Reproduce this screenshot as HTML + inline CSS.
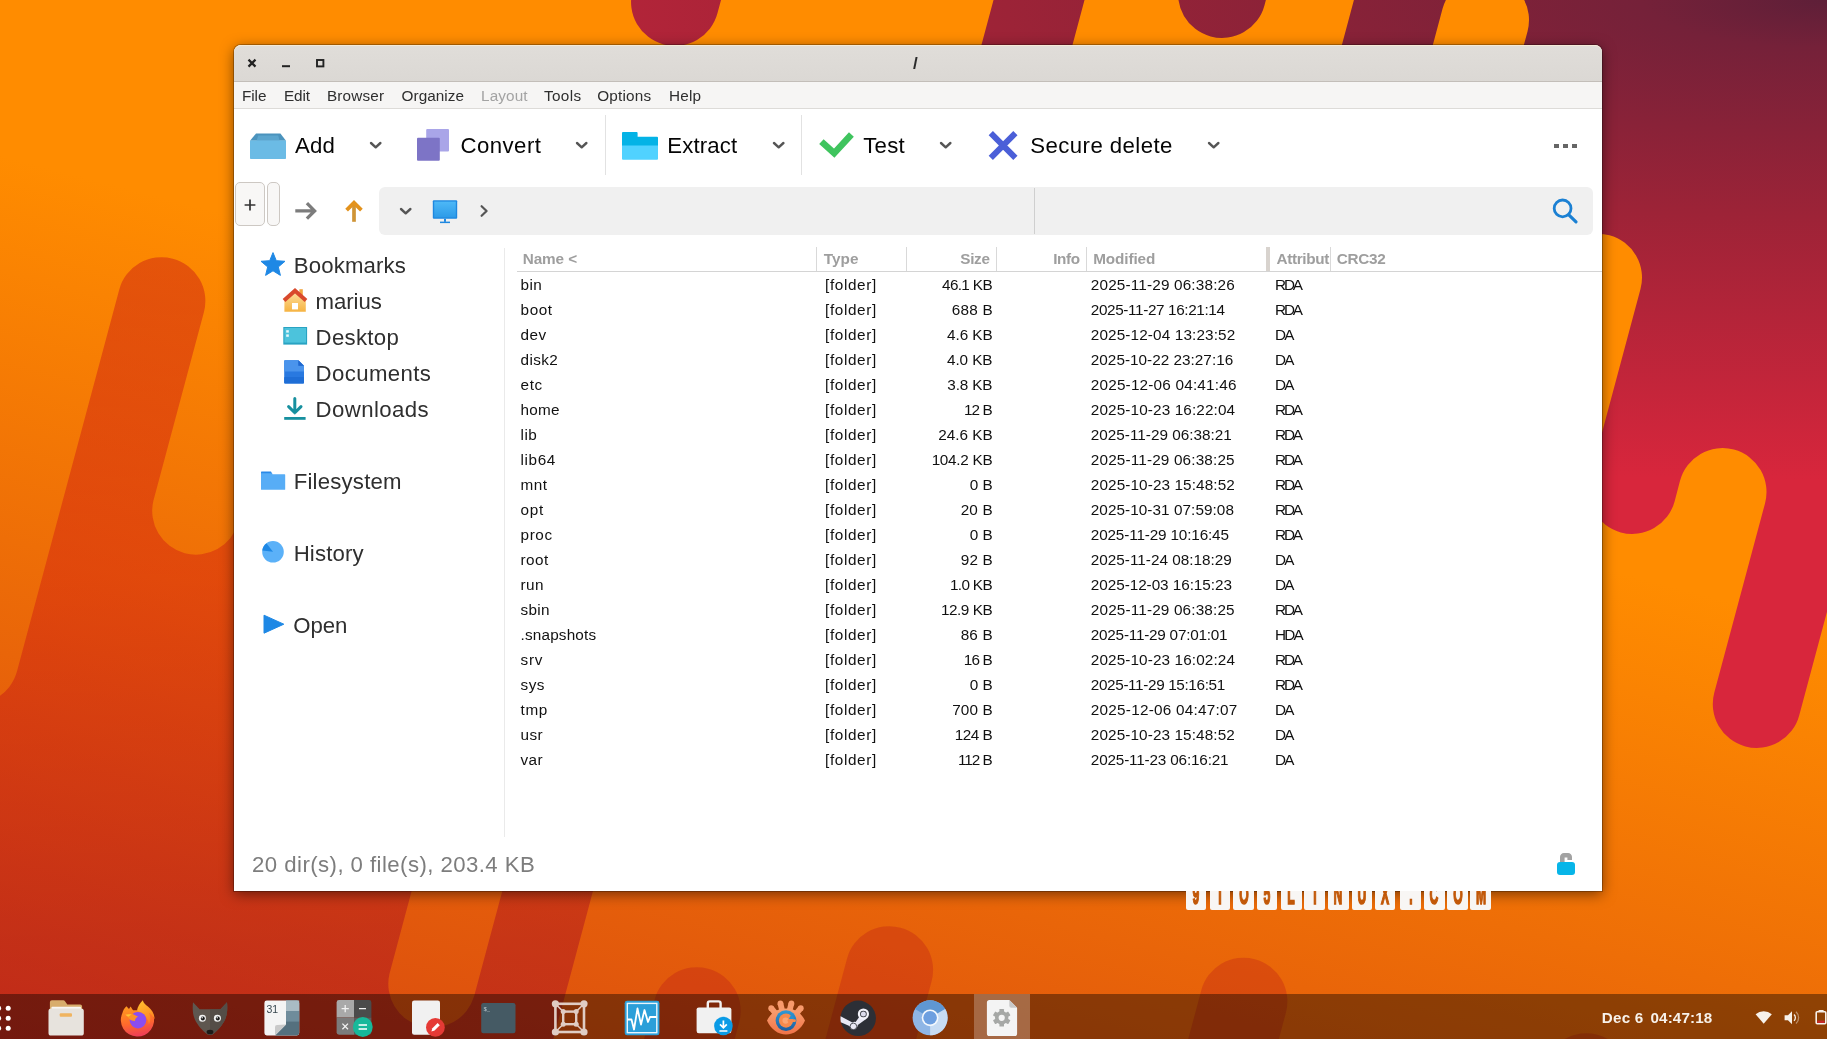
<!DOCTYPE html>
<html lang="en"><head><meta charset="utf-8"><title>/</title>
<style>
*{box-sizing:border-box}
html,body{margin:0;padding:0}
body{width:1827px;height:1039px;position:relative;overflow:hidden;background:#f07808;font-family:"Liberation Sans",sans-serif}
.root{position:absolute;left:0;top:0;width:1827px;height:1039px;overflow:hidden;will-change:transform}
.a,.t,.wall{position:absolute}
.wall{left:0;top:0}
.t{white-space:pre;margin:0;padding:0}
.win{position:absolute;left:234px;top:45px;width:1368px;height:846px;background:#fff;border-radius:7px 7px 0 0;
 box-shadow:0 3px 14px 0 rgba(0,0,0,0.50),0 0 0 1px rgba(0,0,0,0.25)}
.titlebar{position:absolute;left:234px;top:45px;width:1368px;height:37px;background:linear-gradient(#e0ddd9,#dbd8d4);border-radius:7px 7px 0 0;border-bottom:1px solid #c3beb9;border-top:1px solid #f4ead8}
.menubar{position:absolute;left:234px;top:82px;width:1368px;height:27px;background:#f6f5f4;border-bottom:1px solid #dddbd8}
.vsep{position:absolute;width:1px;background:#e2e2e2}
.btn{position:absolute;border:1px solid #cdc8c3;border-radius:5px;background:#f8f7f6}
.addr{position:absolute;left:379px;top:187px;width:1214px;height:48px;background:#f0f0f0;border-radius:6px}
.tbar{position:absolute;left:0;top:994px;width:1827px;height:45px;background:rgba(0,0,0,0.40)}
.wm{position:absolute;left:1185.8px;top:891px;width:306px;height:19px;overflow:hidden}
.wb{position:absolute;top:0;width:20.6px;height:19px;background:#f8f6f4;border-radius:0 0 2px 2px;overflow:hidden}
.wb span{position:absolute;left:-19.7px;width:60px;top:-10.8px;text-align:center;font-weight:bold;font-size:29px;line-height:29px;color:#c25808;-webkit-text-stroke:1.7px #c25808;transform:scaleX(0.42)}
</style></head><body>
<div class="root">
<svg class="wall" width="1827" height="1039" viewBox="0 0 1827 1039">
<defs>
<linearGradient id="gO" gradientUnits="userSpaceOnUse" x1="-37.5" y1="145.5" x2="-250" y2="970">
<stop offset="0" stop-color="#FF8C00"/><stop offset="1" stop-color="#D84710"/></linearGradient>
<radialGradient id="gR" gradientUnits="userSpaceOnUse" cx="0" cy="0" r="1" gradientTransform="translate(1827 0) scale(1860 480)">
<stop offset="0" stop-color="#5E1F38"/><stop offset="0.1" stop-color="#752139"/><stop offset="0.45" stop-color="#9D2337"/><stop offset="1" stop-color="#D8263C"/></radialGradient>
<linearGradient id="gD" gradientUnits="userSpaceOnUse" x1="0" y1="300" x2="0" y2="1000">
<stop offset="0" stop-color="#BE0019" stop-opacity="0.38"/><stop offset="0.4" stop-color="#C80014" stop-opacity="0.34"/><stop offset="0.92" stop-color="#9E0025" stop-opacity="0.40"/></linearGradient>
</defs>
<rect width="1827" height="1039" fill="url(#gO)"/>
<path d="M-300.0,1400.0 L-67.7,648.7 A43.80,43.80 0 0 0 17.0,671.3 L119.2,289.7 A43.80,43.80 0 0 1 203.9,312.3 L153.4,500.7 A43.80,43.80 0 0 0 238.0,523.3 L268.7,408.7 A43.80,43.80 0 0 1 353.4,431.3 L284.4,688.7 A43.80,43.80 0 0 0 369.0,711.3 L401.9,588.7 A43.80,43.80 0 0 1 486.5,611.3 L389.5,973.7 A43.80,43.80 0 0 0 474.1,996.3 L583.3,588.7 A43.80,43.80 0 0 1 667.9,611.3 L486.5,1288.7 A43.80,43.80 0 0 0 571.1,1311.3 L547.3,1400.0 Z" fill="url(#gD)"/>
<line x1="696.9" y1="1011" x2="619.5" y2="1300" stroke="#AA001E" stroke-opacity="0.24" stroke-width="87.6" stroke-linecap="round"/>
<line x1="889.3" y1="970" x2="800.9" y2="1300" stroke="#AA001E" stroke-opacity="0.24" stroke-width="87.6" stroke-linecap="round"/>
<line x1="1243.6" y1="1001.5" x2="1163.7" y2="1300" stroke="#AA001E" stroke-opacity="0.24" stroke-width="87.6" stroke-linecap="round"/>
<line x1="1586.2" y1="1077" x2="1526.5" y2="1300" stroke="#AA001E" stroke-opacity="0.24" stroke-width="87.6" stroke-linecap="round"/>
<path d="M1407.5,-200.0 L1276.6,288.6 A43.95,43.95 0 0 0 1361.5,311.4 L1442.6,8.6 A43.95,43.95 0 0 1 1527.5,31.4 L1450.5,318.6 A43.95,43.95 0 0 0 1535.4,341.4 L1555.6,266.2 A43.95,43.95 0 0 1 1640.5,289.0 L1589.7,478.6 A43.95,43.95 0 0 0 1674.6,501.4 L1680.1,480.6 A43.95,43.95 0 0 1 1765.0,503.4 L1714.3,692.6 A43.95,43.95 0 0 0 1799.2,715.4 L1843.9,548.6 A43.95,43.95 0 0 1 1928.8,571.4 L1843.8,888.6 A43.95,43.95 0 0 0 1928.7,911.4 L2300.0,900.0 L2300.0,-200.0 Z" fill="url(#gR)"/>
<line x1="755.9" y1="-300" x2="675.0" y2="2" stroke="url(#gR)" stroke-width="87.9" stroke-linecap="round"/>
<line x1="1119.4" y1="-300" x2="1014.9" y2="90" stroke="url(#gR)" stroke-width="87.9" stroke-linecap="round"/>
<line x1="1300.8" y1="-300" x2="1222.0" y2="-6" stroke="url(#gR)" stroke-width="87.9" stroke-linecap="round"/>
</svg>
<div class="win"></div>
<div class="titlebar"></div>
<div class="menubar"></div>
<svg class="a" style="left:240px;top:52px" width="100" height="24">
<path d="M8.5,7.6 L15.5,14.6 M15.5,7.6 L8.5,14.6" stroke="#222" stroke-width="2.2" fill="none"/>
<rect x="42" y="13.2" width="8" height="2" fill="#222"/>
<rect x="77" y="8" width="6.4" height="6.4" fill="none" stroke="#222" stroke-width="1.9"/>
</svg>
<span class="t " style="left:912.90px;top:55.01px;font-size:17px;line-height:17px;color:#2b2b2b;font-weight:bold;">/</span>
<span class="t " style="left:242.10px;top:87.85px;font-size:15.3px;line-height:15.3px;color:#2e2e2e;letter-spacing:-0.108px;">File</span>
<span class="t " style="left:283.90px;top:87.85px;font-size:15.3px;line-height:15.3px;color:#2e2e2e;letter-spacing:-0.068px;">Edit</span>
<span class="t " style="left:326.90px;top:87.85px;font-size:15.3px;line-height:15.3px;color:#2e2e2e;letter-spacing:0.185px;">Browser</span>
<span class="t " style="left:401.60px;top:87.85px;font-size:15.3px;line-height:15.3px;color:#2e2e2e;letter-spacing:0.043px;">Organize</span>
<span class="t " style="left:481.00px;top:87.85px;font-size:15.3px;line-height:15.3px;color:#a3a3a3;letter-spacing:0.123px;">Layout</span>
<span class="t " style="left:543.90px;top:87.85px;font-size:15.3px;line-height:15.3px;color:#2e2e2e;letter-spacing:0.377px;">Tools</span>
<span class="t " style="left:597.30px;top:87.85px;font-size:15.3px;line-height:15.3px;color:#2e2e2e;letter-spacing:0.174px;">Options</span>
<span class="t " style="left:669.00px;top:87.85px;font-size:15.3px;line-height:15.3px;color:#2e2e2e;letter-spacing:0.174px;">Help</span>
<svg class="a" style="left:248px;top:128px" width="42" height="36" viewBox="248 128 42 36">
<polygon points="256,133.6 280.4,133.6 286,140.8 250,140.8" fill="#4b93bd"/>
<polygon points="258.2,135.4 278.2,135.4 279.6,140.8 256.6,140.8" fill="#5ba5ce"/>
<rect x="250" y="140.6" width="36" height="18.4" rx="0.8" fill="#6bbbe5"/>
</svg>
<span class="t " style="left:295.10px;top:134.91px;font-size:22.2px;line-height:22.2px;color:#050505;letter-spacing:0.103px;">Add</span>
<svg class="a" style="left:369.3px;top:141.2px" width="13.4" height="8.3"><polyline points="2,2 6.7,6.3 11.4,2" fill="none" stroke="#555" stroke-width="2.4" stroke-linecap="round" stroke-linejoin="round"/></svg>
<svg class="a" style="left:415px;top:127px" width="38" height="38" viewBox="415 127 38 38">
<rect x="426.2" y="129" width="22.8" height="22.4" rx="1" fill="#a9a5e8"/>
<rect x="417" y="137.8" width="22.8" height="23" rx="1" fill="#7d74c6"/>
</svg>
<span class="t " style="left:460.40px;top:134.91px;font-size:22.2px;line-height:22.2px;color:#050505;letter-spacing:0.480px;">Convert</span>
<svg class="a" style="left:575.3px;top:141.2px" width="13.4" height="8.3"><polyline points="2,2 6.7,6.3 11.4,2" fill="none" stroke="#555" stroke-width="2.4" stroke-linecap="round" stroke-linejoin="round"/></svg>
<div class="vsep" style="left:605px;top:115px;height:60px"></div>
<svg class="a" style="left:620px;top:130px" width="40" height="32" viewBox="620 130 40 32">
<path d="M622,133 a1,1 0 0 1 1,-1 h13.6 a1,1 0 0 1 1,1 v3.7 h19.4 a1,1 0 0 1 1,1 v8.8 h-36 z" fill="#04b3e6"/>
<path d="M622,145.5 h36 v13.2 a1,1 0 0 1 -1,1 h-34 a1,1 0 0 1 -1,-1 z" fill="#50d2ff"/>
</svg>
<span class="t " style="left:667.30px;top:134.91px;font-size:22.2px;line-height:22.2px;color:#050505;letter-spacing:0.119px;">Extract</span>
<svg class="a" style="left:771.5px;top:141.2px" width="13.4" height="8.3"><polyline points="2,2 6.7,6.3 11.4,2" fill="none" stroke="#555" stroke-width="2.4" stroke-linecap="round" stroke-linejoin="round"/></svg>
<div class="vsep" style="left:801px;top:115px;height:60px"></div>
<svg class="a" style="left:816px;top:128px" width="42" height="34" viewBox="816 128 42 34">
<polyline points="821.4,141.6 834.2,153.2 851.4,134.6" fill="none" stroke="#3fc45e" stroke-width="6.6" stroke-linejoin="miter"/>
</svg>
<span class="t " style="left:863.20px;top:134.91px;font-size:22.2px;line-height:22.2px;color:#050505;letter-spacing:0.295px;">Test</span>
<svg class="a" style="left:939.3px;top:141.2px" width="13.4" height="8.3"><polyline points="2,2 6.7,6.3 11.4,2" fill="none" stroke="#555" stroke-width="2.4" stroke-linecap="round" stroke-linejoin="round"/></svg>
<svg class="a" style="left:985px;top:128px" width="36" height="36" viewBox="985 128 36 36">
<path d="M990.8,133.2 L1015.4,157.8 M1015.4,133.2 L990.8,157.8" stroke="#4b5fd8" stroke-width="6" fill="none"/>
</svg>
<span class="t " style="left:1030.30px;top:134.91px;font-size:22.2px;line-height:22.2px;color:#050505;letter-spacing:0.434px;">Secure delete</span>
<svg class="a" style="left:1207.3px;top:141.2px" width="13.4" height="8.3"><polyline points="2,2 6.7,6.3 11.4,2" fill="none" stroke="#555" stroke-width="2.4" stroke-linecap="round" stroke-linejoin="round"/></svg>
<div class="a" style="left:1554px;top:143.6px;width:4.6px;height:4.4px;background:#666"></div>
<div class="a" style="left:1563.2px;top:143.6px;width:4.6px;height:4.4px;background:#666"></div>
<div class="a" style="left:1572.4px;top:143.6px;width:4.6px;height:4.4px;background:#666"></div>
<div class="btn" style="left:234.5px;top:181.5px;width:30.6px;height:44.6px"></div>
<div class="btn" style="left:266.8px;top:181.5px;width:12.8px;height:44.6px"></div>
<svg class="a" style="left:240px;top:195px" width="20" height="20">
<path d="M10,4.6 V15.4 M4.6,10 H15.4" stroke="#333" stroke-width="1.7" fill="none"/></svg>
<svg class="a" style="left:290px;top:198px" width="32" height="26">
<path d="M5.3,12.9 H24.6 M16.9,5.2 L24.6,12.9 L16.9,20.6" stroke="#7c7c7c" stroke-width="3.3" fill="none" stroke-linejoin="miter"/></svg>
<svg class="a" style="left:340px;top:196px" width="28" height="30">
<path d="M14,25.8 V7.4" stroke="#cf9436" stroke-width="3.7" fill="none"/>
<path d="M6.6,14.2 L14,6.8 L21.4,14.2" stroke="#e3921c" stroke-width="3.8" fill="none" stroke-linejoin="miter"/></svg>
<div class="addr"></div>
<div class="a" style="left:1034px;top:188px;width:1px;height:46px;background:#cfcfcf"></div>
<svg class="a" style="left:399.2px;top:206.8px" width="13.4" height="8.3"><polyline points="2,2 6.7,6.3 11.4,2" fill="none" stroke="#555" stroke-width="2.4" stroke-linecap="round" stroke-linejoin="round"/></svg>
<svg class="a" style="left:430px;top:198px" width="30" height="28" viewBox="430 198 30 28">
<defs><linearGradient id="mon" x1="0" y1="0" x2="0" y2="1"><stop offset="0" stop-color="#4db8f7"/><stop offset="1" stop-color="#2d9be8"/></linearGradient></defs>
<rect x="432.8" y="200.2" width="24.4" height="18.6" rx="1" fill="#1e88e0"/>
<rect x="434.2" y="201.6" width="21.6" height="15.8" fill="url(#mon)"/>
<rect x="444" y="218.8" width="2" height="3" fill="#1e88e0"/>
<rect x="440" y="221.6" width="10" height="1.5" fill="#1e88e0"/>
</svg>
<svg class="a" style="left:476px;top:200px" width="16" height="22">
<polyline points="5.6,6.2 10.6,11 5.6,15.8" fill="none" stroke="#555" stroke-width="2.2" stroke-linecap="round" stroke-linejoin="round"/></svg>
<svg class="a" style="left:1548px;top:194px" width="34" height="34" viewBox="1548 194 34 34">
<circle cx="1562.6" cy="208.4" r="8.4" fill="none" stroke="#1b80d3" stroke-width="2.8"/>
<path d="M1568.8,214.8 L1576,221.8" stroke="#1b80d3" stroke-width="3.2" stroke-linecap="round"/></svg>
<svg class="a" style="left:258px;top:249px" width="30" height="30" viewBox="258 249 30 30"><polygon points="273.00,252.60 276.29,260.67 284.98,261.31 278.33,266.93 280.41,275.39 273.00,270.80 265.59,275.39 267.67,266.93 261.02,261.31 269.71,260.67" fill="#1e88e5" stroke="#1e88e5" stroke-width="1" stroke-linejoin="round"/></svg>
<span class="t " style="left:293.70px;top:254.81px;font-size:22.2px;line-height:22.2px;color:#2f2f2f;letter-spacing:0.157px;">Bookmarks</span>
<svg class="a" style="left:280px;top:286px" width="30" height="28" viewBox="280 286 30 28">
<defs><linearGradient id="hm" x1="0" y1="0" x2="0" y2="1"><stop offset="0" stop-color="#fde0a0"/><stop offset="1" stop-color="#f6b341"/></linearGradient></defs>
<rect x="299.4" y="289.2" width="3.4" height="7" fill="#f2a640"/>
<path d="M284.4,300.6 L295,291.4 L305.8,300.6 V311.8 H284.4 Z" fill="url(#hm)"/>
<path d="M284,300.6 L295,290.8 L306,300.6" fill="none" stroke="#d9492c" stroke-width="4" stroke-linejoin="miter"/>
<rect x="292" y="303" width="6" height="6.4" fill="#fff"/>
</svg>
<span class="t " style="left:315.60px;top:290.51px;font-size:22.2px;line-height:22.2px;color:#2f2f2f;letter-spacing:-0.064px;">marius</span>
<svg class="a" style="left:281px;top:324px" width="30" height="24" viewBox="281 324 30 24">
<rect x="283.3" y="327" width="23.8" height="17.6" fill="#29a3c2"/>
<rect x="284.4" y="328" width="21.6" height="14.6" fill="#4cc3dc"/>
<rect x="286.2" y="330.2" width="2.6" height="2.4" fill="#e8f8fc"/>
<rect x="286.2" y="334.4" width="2.6" height="2.4" fill="#e8f8fc"/>
</svg>
<span class="t " style="left:315.60px;top:326.51px;font-size:22.2px;line-height:22.2px;color:#2f2f2f;letter-spacing:0.295px;">Desktop</span>
<svg class="a" style="left:282px;top:358px" width="26" height="28" viewBox="282 358 26 28">
<path d="M284.2,361 a0.8,0.8 0 0 1 .8,-.8 H298.4 L304,365.8 V382.8 a0.8,0.8 0 0 1 -.8,.8 H285 a0.8,0.8 0 0 1 -.8,-.8 Z" fill="#2979e0"/>
<path d="M284.2,361 a0.8,0.8 0 0 1 .8,-.8 H298.4 V365.8 H304 V371.5 H284.2 Z" fill="#4a94ec"/>
<path d="M298.4,360.2 L304,365.8 H298.4 Z" fill="#2168cf"/>
<rect x="284.2" y="377" width="19.8" height="6.6" rx=".8" fill="#1f6ed6"/>
</svg>
<span class="t " style="left:315.60px;top:362.51px;font-size:22.2px;line-height:22.2px;color:#2f2f2f;letter-spacing:0.377px;">Documents</span>
<svg class="a" style="left:282px;top:395px" width="26" height="28" viewBox="282 395 26 28">
<path d="M294.8,398.4 V412.4 M288.6,406.6 L294.8,412.8 L301,406.6" fill="none" stroke="#17909f" stroke-width="3" stroke-linecap="round" stroke-linejoin="round"/>
<rect x="284.2" y="417" width="21.4" height="2.8" fill="#17909f"/>
</svg>
<span class="t " style="left:315.60px;top:398.51px;font-size:22.2px;line-height:22.2px;color:#2f2f2f;letter-spacing:0.410px;">Downloads</span>
<svg class="a" style="left:259px;top:469px" width="28" height="24" viewBox="259 469 28 24">
<path d="M261,472.2 a.6,.6 0 0 1 .6,-.6 H271 l1.4,2.4 H261 Z" fill="#2a8ae8"/>
<path d="M261,473.2 H271.6 l1,1 H284.6 a.6,.6 0 0 1 .6,.6 V489.2 a.6,.6 0 0 1 -.6,.6 H261.6 a.6,.6 0 0 1 -.6,-.6 Z" fill="#57adf6"/>
</svg>
<span class="t " style="left:293.70px;top:470.71px;font-size:22.2px;line-height:22.2px;color:#2f2f2f;letter-spacing:0.203px;">Filesystem</span>
<svg class="a" style="left:259px;top:538px" width="28" height="28" viewBox="259 538 28 28">
<circle cx="273" cy="551.8" r="10.8" fill="#5bb1f8"/>
<path d="M273,551.8 L262.3,550.4 A10.8,10.8 0 0 1 266.4,543.2 Z" fill="#1e88e5"/>
</svg>
<span class="t " style="left:293.70px;top:542.81px;font-size:22.2px;line-height:22.2px;color:#2f2f2f;letter-spacing:0.156px;">History</span>
<svg class="a" style="left:260px;top:612px" width="28" height="24" viewBox="260 612 28 24">
<polygon points="264,615.2 283.8,624.2 264,633.2" fill="#1e88e5" stroke="#1e88e5" stroke-width="1" stroke-linejoin="round"/>
</svg>
<span class="t " style="left:293.20px;top:614.61px;font-size:22.2px;line-height:22.2px;color:#2f2f2f;">Open</span>
<div class="a" style="left:504px;top:248px;width:1px;height:589px;background:#eaeaea"></div>
<span class="t " style="left:522.70px;top:251.45px;font-size:15.3px;line-height:15.3px;color:#9e9e9e;letter-spacing:-0.095px;font-weight:bold;">Name &lt;</span>
<span class="t " style="left:823.70px;top:251.45px;font-size:15.3px;line-height:15.3px;color:#9e9e9e;letter-spacing:0.079px;font-weight:bold;">Type</span>
<span class="t " style="left:960.26px;top:251.45px;font-size:15.3px;line-height:15.3px;color:#9e9e9e;letter-spacing:-0.292px;font-weight:bold;">Size</span>
<span class="t " style="left:1053.20px;top:251.45px;font-size:15.3px;line-height:15.3px;color:#9e9e9e;letter-spacing:-0.349px;font-weight:bold;">Info</span>
<span class="t " style="left:1093.20px;top:251.45px;font-size:15.3px;line-height:15.3px;color:#9e9e9e;letter-spacing:-0.099px;font-weight:bold;">Modified</span>
<div class="a" style="left:1272px;top:247px;width:58.3px;height:24px;overflow:hidden"><span class="t " style="left:4.60px;top:4.45px;font-size:15.3px;line-height:15.3px;color:#9e9e9e;letter-spacing:-0.359px;font-weight:bold;">Attribut</span></div>
<span class="t " style="left:1336.70px;top:251.45px;font-size:15.3px;line-height:15.3px;color:#9e9e9e;letter-spacing:-0.272px;font-weight:bold;">CRC32</span>
<div class="a" style="left:816px;top:247px;width:1px;height:24px;background:#d9d9d9"></div>
<div class="a" style="left:906px;top:247px;width:1px;height:24px;background:#d9d9d9"></div>
<div class="a" style="left:996px;top:247px;width:1px;height:24px;background:#d9d9d9"></div>
<div class="a" style="left:1086px;top:247px;width:1px;height:24px;background:#d9d9d9"></div>
<div class="a" style="left:1330px;top:247px;width:1px;height:24px;background:#d9d9d9"></div>
<div class="a" style="left:1266.4px;top:247px;width:4px;height:24px;background:#d8d3ce"></div>
<div class="a" style="left:517px;top:271px;width:1085px;height:1px;background:#d4d4d4"></div>
<span class="t " style="left:520.60px;top:277.45px;font-size:15.3px;line-height:15.3px;color:#111;letter-spacing:0.394px;">bin</span>
<span class="t " style="left:825.10px;top:277.45px;font-size:15.3px;line-height:15.3px;color:#111;letter-spacing:0.620px;">[folder]</span>
<span class="t " style="left:942.02px;top:277.45px;font-size:15.3px;line-height:15.3px;color:#111;letter-spacing:-0.643px;">46.1 KB</span>
<span class="t " style="left:1090.80px;top:277.45px;font-size:15.3px;line-height:15.3px;color:#111;letter-spacing:0.169px;">2025-11-29 06:38:26</span>
<span class="t " style="left:1275.10px;top:277.45px;font-size:15.3px;line-height:15.3px;color:#111;letter-spacing:-2.199px;">RDA</span>
<span class="t " style="left:520.60px;top:302.45px;font-size:15.3px;line-height:15.3px;color:#111;letter-spacing:0.535px;">boot</span>
<span class="t " style="left:825.10px;top:302.45px;font-size:15.3px;line-height:15.3px;color:#111;letter-spacing:0.620px;">[folder]</span>
<span class="t " style="left:951.63px;top:302.45px;font-size:15.3px;line-height:15.3px;color:#111;letter-spacing:0.249px;">688 B</span>
<span class="t " style="left:1090.80px;top:302.45px;font-size:15.3px;line-height:15.3px;color:#111;letter-spacing:-0.373px;">2025-11-27 16:21:14</span>
<span class="t " style="left:1275.10px;top:302.45px;font-size:15.3px;line-height:15.3px;color:#111;letter-spacing:-2.199px;">RDA</span>
<span class="t " style="left:520.60px;top:327.45px;font-size:15.3px;line-height:15.3px;color:#111;letter-spacing:0.416px;">dev</span>
<span class="t " style="left:825.10px;top:327.45px;font-size:15.3px;line-height:15.3px;color:#111;letter-spacing:0.620px;">[folder]</span>
<span class="t " style="left:947.08px;top:327.45px;font-size:15.3px;line-height:15.3px;color:#111;letter-spacing:-0.082px;">4.6 KB</span>
<span class="t " style="left:1090.80px;top:327.45px;font-size:15.3px;line-height:15.3px;color:#111;letter-spacing:0.134px;">2025-12-04 13:23:52</span>
<span class="t " style="left:1275.10px;top:327.45px;font-size:15.3px;line-height:15.3px;color:#111;letter-spacing:-1.952px;">DA</span>
<span class="t " style="left:520.60px;top:352.45px;font-size:15.3px;line-height:15.3px;color:#111;letter-spacing:0.392px;">disk2</span>
<span class="t " style="left:825.10px;top:352.45px;font-size:15.3px;line-height:15.3px;color:#111;letter-spacing:0.620px;">[folder]</span>
<span class="t " style="left:946.93px;top:352.45px;font-size:15.3px;line-height:15.3px;color:#111;letter-spacing:-0.053px;">4.0 KB</span>
<span class="t " style="left:1090.80px;top:352.45px;font-size:15.3px;line-height:15.3px;color:#111;letter-spacing:0.019px;">2025-10-22 23:27:16</span>
<span class="t " style="left:1275.10px;top:352.45px;font-size:15.3px;line-height:15.3px;color:#111;letter-spacing:-1.952px;">DA</span>
<span class="t " style="left:520.60px;top:377.45px;font-size:15.3px;line-height:15.3px;color:#111;letter-spacing:0.592px;">etc</span>
<span class="t " style="left:825.10px;top:377.45px;font-size:15.3px;line-height:15.3px;color:#111;letter-spacing:0.620px;">[folder]</span>
<span class="t " style="left:947.31px;top:377.45px;font-size:15.3px;line-height:15.3px;color:#111;letter-spacing:-0.129px;">3.8 KB</span>
<span class="t " style="left:1090.80px;top:377.45px;font-size:15.3px;line-height:15.3px;color:#111;letter-spacing:0.199px;">2025-12-06 04:41:46</span>
<span class="t " style="left:1275.10px;top:377.45px;font-size:15.3px;line-height:15.3px;color:#111;letter-spacing:-1.952px;">DA</span>
<span class="t " style="left:520.60px;top:402.45px;font-size:15.3px;line-height:15.3px;color:#111;letter-spacing:0.203px;">home</span>
<span class="t " style="left:825.10px;top:402.45px;font-size:15.3px;line-height:15.3px;color:#111;letter-spacing:0.620px;">[folder]</span>
<span class="t " style="left:963.96px;top:402.45px;font-size:15.3px;line-height:15.3px;color:#111;letter-spacing:-0.945px;">12 B</span>
<span class="t " style="left:1090.80px;top:402.45px;font-size:15.3px;line-height:15.3px;color:#111;letter-spacing:0.127px;">2025-10-23 16:22:04</span>
<span class="t " style="left:1275.10px;top:402.45px;font-size:15.3px;line-height:15.3px;color:#111;letter-spacing:-2.199px;">RDA</span>
<span class="t " style="left:520.60px;top:427.45px;font-size:15.3px;line-height:15.3px;color:#111;letter-spacing:0.389px;">lib</span>
<span class="t " style="left:825.10px;top:427.45px;font-size:15.3px;line-height:15.3px;color:#111;letter-spacing:0.620px;">[folder]</span>
<span class="t " style="left:938.37px;top:427.45px;font-size:15.3px;line-height:15.3px;color:#111;letter-spacing:-0.034px;">24.6 KB</span>
<span class="t " style="left:1090.80px;top:427.45px;font-size:15.3px;line-height:15.3px;color:#111;">2025-11-29 06:38:21</span>
<span class="t " style="left:1275.10px;top:427.45px;font-size:15.3px;line-height:15.3px;color:#111;letter-spacing:-2.199px;">RDA</span>
<span class="t " style="left:520.60px;top:452.45px;font-size:15.3px;line-height:15.3px;color:#111;letter-spacing:0.584px;">lib64</span>
<span class="t " style="left:825.10px;top:452.45px;font-size:15.3px;line-height:15.3px;color:#111;letter-spacing:0.620px;">[folder]</span>
<span class="t " style="left:931.65px;top:452.45px;font-size:15.3px;line-height:15.3px;color:#111;letter-spacing:-0.284px;">104.2 KB</span>
<span class="t " style="left:1090.80px;top:452.45px;font-size:15.3px;line-height:15.3px;color:#111;letter-spacing:0.159px;">2025-11-29 06:38:25</span>
<span class="t " style="left:1275.10px;top:452.45px;font-size:15.3px;line-height:15.3px;color:#111;letter-spacing:-2.199px;">RDA</span>
<span class="t " style="left:520.60px;top:477.45px;font-size:15.3px;line-height:15.3px;color:#111;letter-spacing:0.406px;">mnt</span>
<span class="t " style="left:825.10px;top:477.45px;font-size:15.3px;line-height:15.3px;color:#111;letter-spacing:0.620px;">[folder]</span>
<span class="t " style="left:969.63px;top:477.45px;font-size:15.3px;line-height:15.3px;color:#111;">0 B</span>
<span class="t " style="left:1090.80px;top:477.45px;font-size:15.3px;line-height:15.3px;color:#111;letter-spacing:0.106px;">2025-10-23 15:48:52</span>
<span class="t " style="left:1275.10px;top:477.45px;font-size:15.3px;line-height:15.3px;color:#111;letter-spacing:-2.199px;">RDA</span>
<span class="t " style="left:520.60px;top:502.45px;font-size:15.3px;line-height:15.3px;color:#111;letter-spacing:0.655px;">opt</span>
<span class="t " style="left:825.10px;top:502.45px;font-size:15.3px;line-height:15.3px;color:#111;letter-spacing:0.620px;">[folder]</span>
<span class="t " style="left:960.68px;top:502.45px;font-size:15.3px;line-height:15.3px;color:#111;letter-spacing:0.150px;">20 B</span>
<span class="t " style="left:1090.80px;top:502.45px;font-size:15.3px;line-height:15.3px;color:#111;letter-spacing:0.061px;">2025-10-31 07:59:08</span>
<span class="t " style="left:1275.10px;top:502.45px;font-size:15.3px;line-height:15.3px;color:#111;letter-spacing:-2.199px;">RDA</span>
<span class="t " style="left:520.60px;top:527.45px;font-size:15.3px;line-height:15.3px;color:#111;letter-spacing:0.560px;">proc</span>
<span class="t " style="left:825.10px;top:527.45px;font-size:15.3px;line-height:15.3px;color:#111;letter-spacing:0.620px;">[folder]</span>
<span class="t " style="left:969.63px;top:527.45px;font-size:15.3px;line-height:15.3px;color:#111;">0 B</span>
<span class="t " style="left:1090.80px;top:527.45px;font-size:15.3px;line-height:15.3px;color:#111;letter-spacing:-0.152px;">2025-11-29 10:16:45</span>
<span class="t " style="left:1275.10px;top:527.45px;font-size:15.3px;line-height:15.3px;color:#111;letter-spacing:-2.199px;">RDA</span>
<span class="t " style="left:520.60px;top:552.45px;font-size:15.3px;line-height:15.3px;color:#111;letter-spacing:0.435px;">root</span>
<span class="t " style="left:825.10px;top:552.45px;font-size:15.3px;line-height:15.3px;color:#111;letter-spacing:0.620px;">[folder]</span>
<span class="t " style="left:960.82px;top:552.45px;font-size:15.3px;line-height:15.3px;color:#111;letter-spacing:0.101px;">92 B</span>
<span class="t " style="left:1090.80px;top:552.45px;font-size:15.3px;line-height:15.3px;color:#111;letter-spacing:0.007px;">2025-11-24 08:18:29</span>
<span class="t " style="left:1275.10px;top:552.45px;font-size:15.3px;line-height:15.3px;color:#111;letter-spacing:-1.952px;">DA</span>
<span class="t " style="left:520.60px;top:577.45px;font-size:15.3px;line-height:15.3px;color:#111;letter-spacing:0.381px;">run</span>
<span class="t " style="left:825.10px;top:577.45px;font-size:15.3px;line-height:15.3px;color:#111;letter-spacing:0.620px;">[folder]</span>
<span class="t " style="left:949.94px;top:577.45px;font-size:15.3px;line-height:15.3px;color:#111;letter-spacing:-0.654px;">1.0 KB</span>
<span class="t " style="left:1090.80px;top:577.45px;font-size:15.3px;line-height:15.3px;color:#111;letter-spacing:-0.050px;">2025-12-03 16:15:23</span>
<span class="t " style="left:1275.10px;top:577.45px;font-size:15.3px;line-height:15.3px;color:#111;letter-spacing:-1.952px;">DA</span>
<span class="t " style="left:520.60px;top:602.45px;font-size:15.3px;line-height:15.3px;color:#111;letter-spacing:0.295px;">sbin</span>
<span class="t " style="left:825.10px;top:602.45px;font-size:15.3px;line-height:15.3px;color:#111;letter-spacing:0.620px;">[folder]</span>
<span class="t " style="left:940.89px;top:602.45px;font-size:15.3px;line-height:15.3px;color:#111;letter-spacing:-0.454px;">12.9 KB</span>
<span class="t " style="left:1090.80px;top:602.45px;font-size:15.3px;line-height:15.3px;color:#111;letter-spacing:0.159px;">2025-11-29 06:38:25</span>
<span class="t " style="left:1275.10px;top:602.45px;font-size:15.3px;line-height:15.3px;color:#111;letter-spacing:-2.199px;">RDA</span>
<span class="t " style="left:520.60px;top:627.45px;font-size:15.3px;line-height:15.3px;color:#111;letter-spacing:0.165px;">.snapshots</span>
<span class="t " style="left:825.10px;top:627.45px;font-size:15.3px;line-height:15.3px;color:#111;letter-spacing:0.620px;">[folder]</span>
<span class="t " style="left:960.71px;top:627.45px;font-size:15.3px;line-height:15.3px;color:#111;letter-spacing:0.140px;">86 B</span>
<span class="t " style="left:1090.80px;top:627.45px;font-size:15.3px;line-height:15.3px;color:#111;letter-spacing:-0.232px;">2025-11-29 07:01:01</span>
<span class="t " style="left:1275.10px;top:627.45px;font-size:15.3px;line-height:15.3px;color:#111;letter-spacing:-1.849px;">HDA</span>
<span class="t " style="left:520.60px;top:652.45px;font-size:15.3px;line-height:15.3px;color:#111;letter-spacing:0.673px;">srv</span>
<span class="t " style="left:825.10px;top:652.45px;font-size:15.3px;line-height:15.3px;color:#111;letter-spacing:0.620px;">[folder]</span>
<span class="t " style="left:963.82px;top:652.45px;font-size:15.3px;line-height:15.3px;color:#111;letter-spacing:-0.897px;">16 B</span>
<span class="t " style="left:1090.80px;top:652.45px;font-size:15.3px;line-height:15.3px;color:#111;letter-spacing:0.115px;">2025-10-23 16:02:24</span>
<span class="t " style="left:1275.10px;top:652.45px;font-size:15.3px;line-height:15.3px;color:#111;letter-spacing:-2.199px;">RDA</span>
<span class="t " style="left:520.60px;top:677.45px;font-size:15.3px;line-height:15.3px;color:#111;letter-spacing:0.393px;">sys</span>
<span class="t " style="left:825.10px;top:677.45px;font-size:15.3px;line-height:15.3px;color:#111;letter-spacing:0.620px;">[folder]</span>
<span class="t " style="left:969.63px;top:677.45px;font-size:15.3px;line-height:15.3px;color:#111;">0 B</span>
<span class="t " style="left:1090.80px;top:677.45px;font-size:15.3px;line-height:15.3px;color:#111;letter-spacing:-0.362px;">2025-11-29 15:16:51</span>
<span class="t " style="left:1275.10px;top:677.45px;font-size:15.3px;line-height:15.3px;color:#111;letter-spacing:-2.199px;">RDA</span>
<span class="t " style="left:520.60px;top:702.45px;font-size:15.3px;line-height:15.3px;color:#111;letter-spacing:0.560px;">tmp</span>
<span class="t " style="left:825.10px;top:702.45px;font-size:15.3px;line-height:15.3px;color:#111;letter-spacing:0.620px;">[folder]</span>
<span class="t " style="left:952.29px;top:702.45px;font-size:15.3px;line-height:15.3px;color:#111;letter-spacing:0.084px;">700 B</span>
<span class="t " style="left:1090.80px;top:702.45px;font-size:15.3px;line-height:15.3px;color:#111;letter-spacing:0.244px;">2025-12-06 04:47:07</span>
<span class="t " style="left:1275.10px;top:702.45px;font-size:15.3px;line-height:15.3px;color:#111;letter-spacing:-1.952px;">DA</span>
<span class="t " style="left:520.60px;top:727.45px;font-size:15.3px;line-height:15.3px;color:#111;letter-spacing:0.347px;">usr</span>
<span class="t " style="left:825.10px;top:727.45px;font-size:15.3px;line-height:15.3px;color:#111;letter-spacing:0.620px;">[folder]</span>
<span class="t " style="left:954.71px;top:727.45px;font-size:15.3px;line-height:15.3px;color:#111;letter-spacing:-0.522px;">124 B</span>
<span class="t " style="left:1090.80px;top:727.45px;font-size:15.3px;line-height:15.3px;color:#111;letter-spacing:0.106px;">2025-10-23 15:48:52</span>
<span class="t " style="left:1275.10px;top:727.45px;font-size:15.3px;line-height:15.3px;color:#111;letter-spacing:-1.952px;">DA</span>
<span class="t " style="left:520.60px;top:752.45px;font-size:15.3px;line-height:15.3px;color:#111;letter-spacing:0.340px;">var</span>
<span class="t " style="left:825.10px;top:752.45px;font-size:15.3px;line-height:15.3px;color:#111;letter-spacing:0.620px;">[folder]</span>
<span class="t " style="left:957.99px;top:752.45px;font-size:15.3px;line-height:15.3px;color:#111;letter-spacing:-1.060px;">112 B</span>
<span class="t " style="left:1090.80px;top:752.45px;font-size:15.3px;line-height:15.3px;color:#111;letter-spacing:-0.172px;">2025-11-23 06:16:21</span>
<span class="t " style="left:1275.10px;top:752.45px;font-size:15.3px;line-height:15.3px;color:#111;letter-spacing:-1.952px;">DA</span>
<span class="t " style="left:252.10px;top:853.81px;font-size:22.2px;line-height:22.2px;color:#7d7d7d;letter-spacing:0.435px;">20 dir(s), 0 file(s), 203.4 KB</span>
<svg class="a" style="left:1552px;top:848px" width="28" height="32" viewBox="1552 848 28 32">
<path d="M1562.3,863 V856.9 a1.6,1.6 0 0 1 1.6,-1.6 h4.2 a1.6,1.6 0 0 1 1.6,1.6 V859.9" fill="none" stroke="#a2a2a2" stroke-width="4.6"/>
<rect x="1557" y="862" width="18" height="13" rx="3" fill="#07b5e8"/>
</svg>
<div class="wm">
<div class="wb" style="left:0.0px"><span>9</span></div>
<div class="wb" style="left:23.8px"><span>T</span></div>
<div class="wb" style="left:47.4px"><span>O</span></div>
<div class="wb" style="left:71.1px"><span>5</span></div>
<div class="wb" style="left:95.2px"><span>L</span></div>
<div class="wb" style="left:118.4px"><span>I</span></div>
<div class="wb" style="left:142.2px"><span>N</span></div>
<div class="wb" style="left:165.8px"><span>U</span></div>
<div class="wb" style="left:188.8px"><span>X</span></div>
<div class="wb" style="left:214.4px"><span>.</span></div>
<div class="wb" style="left:238.2px"><span>C</span></div>
<div class="wb" style="left:261.4px"><span>O</span></div>
<div class="wb" style="left:284.4px"><span>M</span></div>
</div>
<div class="tbar"></div>
<div class="a" style="left:974px;top:994px;width:56px;height:45px;background:rgba(255,255,255,0.25)"></div>
<svg class="a" style="left:0;top:1000px" width="14" height="36" viewBox="0 1000 14 36"><circle cx="-1.4" cy="1008.2" r="2.5" fill="#fff"/><circle cx="-1.4" cy="1018.2" r="2.5" fill="#fff"/><circle cx="-1.4" cy="1028.3" r="2.5" fill="#fff"/><circle cx="8.2" cy="1008.2" r="2.5" fill="#fff"/><circle cx="8.2" cy="1018.2" r="2.5" fill="#fff"/><circle cx="8.2" cy="1028.3" r="2.5" fill="#fff"/></svg>
<svg class="a" style="left:46.0px;top:998.0px" width="40" height="40" viewBox="46.0 998.0 40 40"><path d="M49.900,1002.300 a2,2 0 0 1 2,-2 h11.400 a2,2 0 0 1 1.700,.9 l2.300,3.300 h12.800 a2,2 0 0 1 2,2 V1012 H49.900 Z" fill="#d8ad6c"/>
<rect x="51.500" y="1006.800" width="29.500" height="4" rx=".6" fill="#f8f6f3"/>
<rect x="48.500" y="1008.400" width="35.300" height="27.200" rx="2.600" fill="#e7e3dd"/>
<rect x="59.700" y="1013.200" width="12.300" height="3.500" rx="1" fill="#f0b45f"/></svg>
<svg class="a" style="left:118.0px;top:998.0px" width="40" height="40" viewBox="118.0 998.0 40 40"><defs><linearGradient id="ff" x1="0.3" y1="0" x2="0.5" y2="1"><stop offset="0" stop-color="#ff9a20"/><stop offset="0.55" stop-color="#ff6a2c"/><stop offset="1" stop-color="#ee3c58"/></linearGradient>
<linearGradient id="ffl" x1="0" y1="0" x2="0.4" y2="1"><stop offset="0" stop-color="#ffc530"/><stop offset="1" stop-color="#ff8420"/></linearGradient></defs>
<path d="M126.400,1006.200 l2.600,2.700 l1.600,-2.300 l2.400,3.600 h8 l12,4 a16.600,16.600 0 1 1 -30.600,-1.200 c.6,-2.600 2,-5 4,-6.800 z" fill="url(#ff)"/>
<path d="M137,1010.600 c.5,-4.200 3,-7.600 5.800,-10.400 c.7,3 2.600,4.400 5.400,6.600 c3.600,3 6.300,7.200 6.500,12.600 c-1.600,-3.400 -3.300,-5 -5.600,-6.200 c1.700,3.600 1.700,7.400 -.2,11 c-1,-7 -5.400,-10.800 -11.900,-13.600 z" fill="url(#ffl)"/>
<circle cx="138" cy="1020.200" r="8.300" fill="#8b4df0"/>
<path d="M125.300,1014.800 c3,-1.400 6.800,-1.300 9.500,.2 c1.400,.7 2.500,1.500 3.600,1.600 c-2.200,1 -3.300,2.300 -3.500,4.300 c-3.600,.3 -6.400,-1.700 -7.400,-4.600 z" fill="#ff9226"/>
<path d="M125.300,1014.800 c2,-.7 4.300,-.8 6.400,-.3 l-3.600,2.200 z" fill="#ffc534"/></svg>
<svg class="a" style="left:190.0px;top:998.0px" width="40" height="40" viewBox="190.0 998.0 40 40"><path d="M193,1002.200 L199.600,1009.300 H220.400 L227,1002.200 C227.600,1008 227.300,1013 226,1017 C224,1023.500 219,1029 214.400,1033 a6,6 0 0 1 -8.800,0 C201,1029 196,1023.500 194,1017 C192.700,1013 192.400,1008 193,1002.200 Z" fill="#5e5750"/>
<path d="M210,1009.300 H220.400 L227,1002.200 C227.600,1008 227.300,1013 226,1017 C224,1023.500 219,1029 214.400,1033 a6,6 0 0 1 -4.400,1.900 Z" fill="#544d47"/>
<circle cx="202.400" cy="1018.200" r="3.500" fill="#f2f2f2"/><circle cx="217.400" cy="1018.200" r="3.500" fill="#f2f2f2"/>
<circle cx="202.800" cy="1018.600" r="2" fill="#1c1c1c"/><circle cx="217.800" cy="1018.600" r="2" fill="#1c1c1c"/>
<circle cx="202.200" cy="1017.800" r=".7" fill="#fff"/><circle cx="217.200" cy="1017.800" r=".7" fill="#fff"/>
<ellipse cx="210" cy="1032" rx="3.400" ry="2.300" fill="#1d1a18"/></svg>
<svg class="a" style="left:262.0px;top:998.0px" width="40" height="40" viewBox="262.0 998.0 40 40"><rect x="264.400" y="1000.500" width="34.800" height="35" rx="2.400" fill="#f4f4f4"/>
<path d="M286,1000.500 h10.800 a2.400,2.400 0 0 1 2.400,2.400 V1033.100 a2.400,2.400 0 0 1 -2.400,2.400 H275 L286,1024.500 Z" fill="#55707e"/>
<rect x="286" y="1000.500" width="13.200" height="10.500" fill="#a9bbc4"/>
<rect x="286" y="1011" width="13.200" height="10.600" fill="#6f8c9b"/>
<path d="M275,1035.500 L275,1027 a2,2 0 0 1 2,-2 L286,1024.500 Z" fill="#c9c9c9"/>
<text x="266.500" y="1012.600" font-family="Liberation Sans, sans-serif" font-size="10.500" fill="#37474f">31</text></svg>
<svg class="a" style="left:334.0px;top:998.0px" width="40" height="40" viewBox="334.0 998.0 40 40"><path d="M336.600,1002.400 a2.400,2.400 0 0 1 2.400,-2.400 H354 V1017.400 H336.600 Z" fill="#a9a9a9"/>
<path d="M354,1000 h15 a2.400,2.400 0 0 1 2.400,2.400 V1017.400 H354 Z" fill="#4b4b4b"/>
<path d="M336.600,1017.400 H354 V1034.700 H339 a2.400,2.400 0 0 1 -2.400,-2.400 Z" fill="#7b7b7b"/>
<path d="M354,1017.400 H371.400 V1032.300 a2.400,2.400 0 0 1 -2.400,2.400 H354 Z" fill="#5c5c5c"/>
<path d="M341.600,1008.600 h7.200 M345.200,1005 v7.200 M359,1008.600 h7 M342.400,1023.600 l5.600,5.600 M348,1023.600 l-5.600,5.600" stroke="#f2f2f2" stroke-width="1.300" fill="none"/>
<circle cx="362.800" cy="1027" r="9.900" fill="#17b89a"/>
<path d="M358.600,1025 h8.400 M358.600,1029 h8.400" stroke="#fff" stroke-width="1.500"/></svg>
<svg class="a" style="left:406.0px;top:998.0px" width="40" height="40" viewBox="406.0 998.0 40 40"><rect x="412" y="1000.400" width="28" height="34.300" rx="2.200" fill="#f1f1f1"/>
<circle cx="435.400" cy="1027.400" r="9.400" fill="#e53a35"/>
<path d="M431.400,1031.400 l1,-3.200 l5.200,-5.200 l2.200,2.200 l-5.200,5.200 z" fill="#fff"/></svg>
<svg class="a" style="left:478.0px;top:998.0px" width="40" height="40" viewBox="478.0 998.0 40 40"><rect x="481.200" y="1003" width="34.300" height="30.300" rx="2.200" fill="#455a64"/>
<text x="483.500" y="1010.500" font-family="Liberation Mono, monospace" font-size="5.500" fill="#cfd8dc">$_</text></svg>
<svg class="a" style="left:550.0px;top:998.0px" width="40" height="40" viewBox="550.0 998.0 40 40"><g stroke="#e0ccc3" fill="none"><rect x="555.400" y="1003.800" width="28.600" height="28.200" stroke-width="2.600"/>
<rect x="563.200" y="1011.600" width="13" height="12.600" stroke-width="2.400"/>
<path d="M555.400,1003.800 L563.200,1011.600 M584,1003.800 L576.200,1011.600 M555.400,1032 L563.200,1024.200 M584,1032 L576.200,1024.200" stroke-width="1.500"/></g>
<g fill="#e0ccc3"><circle cx="555.400" cy="1003.800" r="3.600"/><circle cx="584" cy="1003.800" r="3.600"/><circle cx="555.400" cy="1032" r="3.600"/><circle cx="584" cy="1032" r="3.600"/>
<circle cx="563.200" cy="1011.600" r="2.500"/><circle cx="576.200" cy="1011.600" r="2.500"/><circle cx="563.200" cy="1024.200" r="2.500"/><circle cx="576.200" cy="1024.200" r="2.500"/></g></svg>
<svg class="a" style="left:622.0px;top:998.0px" width="40" height="40" viewBox="622.0 998.0 40 40"><rect x="624.700" y="1000.800" width="34.700" height="34.500" rx="2.400" fill="#2b9fd9"/>
<rect x="627.300" y="1003.400" width="29.500" height="29.300" fill="none" stroke="#e9f6fd" stroke-width="1.400"/>
<polyline points="627.500,1019.500 631.500,1019.500 634,1029.500 637.500,1008.500 641,1024.500 644.500,1010 648,1022 650,1017 656.500,1017" fill="none" stroke="#fff" stroke-width="1.800" stroke-linejoin="round"/></svg>
<svg class="a" style="left:694.0px;top:998.0px" width="40" height="40" viewBox="694.0 998.0 40 40"><path d="M707.800,1008 V1003.400 a2,2 0 0 1 2,-2 h8.800 a2,2 0 0 1 2,2 V1008" fill="none" stroke="#f1f1f1" stroke-width="2.400"/>
<rect x="696.600" y="1007.400" width="34.800" height="25.900" rx="2.200" fill="#f1f1f1"/>
<circle cx="723.400" cy="1026" r="9.300" fill="#0a9be6"/>
<path d="M723.400,1020.400 v6.600 M720,1024.400 l3.400,3.400 l3.400,-3.400 M719.400,1031 h8" stroke="#fff" stroke-width="1.700" fill="none"/></svg>
<svg class="a" style="left:766.0px;top:998.0px" width="40" height="40" viewBox="766.0 998.0 40 40"><defs><linearGradient id="xe" x1="0" y1="0" x2="0" y2="1"><stop offset="0" stop-color="#f9a071"/><stop offset="1" stop-color="#f07347"/></linearGradient><linearGradient id="xb" x1="0" y1="0" x2="0" y2="1"><stop offset="0" stop-color="#2f9bd8"/><stop offset="1" stop-color="#1b5c9e"/></linearGradient></defs><circle cx="771.2" cy="1008.2" r="2.9" fill="#f89a6c"/><rect x="768.3000000000001" y="1008.2" width="5.8" height="8" fill="#f89a6c" transform="rotate(-40 771.2 1008.2)"/><circle cx="780.4" cy="1003.4" r="2.9" fill="#f89a6c"/><rect x="777.5" y="1003.4" width="5.8" height="8" fill="#f89a6c" transform="rotate(-14 780.4 1003.4)"/><circle cx="791.4" cy="1003.4" r="2.9" fill="#f89a6c"/><rect x="788.5" y="1003.4" width="5.8" height="8" fill="#f89a6c" transform="rotate(14 791.4 1003.4)"/><circle cx="800.8" cy="1008.2" r="2.9" fill="#f89a6c"/><rect x="797.9" y="1008.2" width="5.8" height="8" fill="#f89a6c" transform="rotate(40 800.8 1008.2)"/><path d="M767,1020.6 C771,1012 778,1008.400 786,1008.400 C794,1008.400 801,1012 805,1020.6 C801,1029.500 794,1034.600 786,1034.600 C778,1034.600 771,1029.500 767,1020.6 Z" fill="url(#xe)"/>
<circle cx="786" cy="1020.600" r="10.400" fill="url(#xb)"/>
<circle cx="786" cy="1020.600" r="7.100" fill="#f68a4c"/>
<circle cx="785.600" cy="1020.600" r="3.100" fill="#f9a674"/>
<path d="M788.800,1019.000 L794.200,1019.000 A8.4,8.4 0 0 0 791.400,1014.200 Z" fill="#2a8fcf"/>
<rect x="787.5" y="1019.300" width="8.400" height="2.800" rx="1.400" fill="#f68a4c"/></svg>
<svg class="a" style="left:838.0px;top:998.0px" width="40" height="40" viewBox="838.0 998.0 40 40"><circle cx="858.200" cy="1018.300" r="17.700" fill="#2c2f36"/>
<path d="M840.600,1016.300 L852.400,1022.400 A4.300,4.300 0 0 1 855.6,1022.000 L859.400,1016.800 L866.800,1018.600 L857.800,1025.000 A4.300,4.300 0 0 1 849.400,1026.000 L840.800,1022.300 A17.7,17.7 0 0 1 840.600,1016.300 Z" fill="#e9e9f5"/>
<circle cx="863.400" cy="1014" r="5.600" fill="#f4f4fb"/>
<circle cx="863.400" cy="1014" r="3.300" fill="#2c2f36"/>
<circle cx="863.400" cy="1014" r="2.500" fill="#dcdcec"/>
<circle cx="853.400" cy="1026.400" r="3.300" fill="#e9e9f5" stroke="#2c2f36" stroke-width=".8"/></svg>
<svg class="a" style="left:910.0px;top:998.0px" width="40" height="40" viewBox="910.0 998.0 40 40"><circle cx="930.100" cy="1017.800" r="17.500" fill="#8fb6e6"/>
<path d="M930.100,1017.800 L914.950,1009.050 A17.500,17.500 0 0 1 945.250,1009.050 Z" fill="#5f97d3"/>
<path d="M930.100,1017.800 L945.250,1009.050 A17.500,17.500 0 0 1 930.100,1035.300 Z" fill="#c8dcf3"/>
<circle cx="930.100" cy="1017.800" r="8.400" fill="#f4f8fd"/>
<circle cx="930.100" cy="1017.800" r="6.800" fill="#6d9fe0"/></svg>
<svg class="a" style="left:982.0px;top:996.0px" width="40" height="44" viewBox="982.0 996.0 40 44"><path d="M986.900,1002.600 a2.600,2.600 0 0 1 2.600,-2.600 H1009.300 L1017.100,1007.800 V1033.400 a2.600,2.600 0 0 1 -2.600,2.600 H989.500 a2.600,2.600 0 0 1 -2.600,-2.600 Z" fill="#f4f4f4"/>
<path d="M1009.300,1000 L1017.100,1007.800 H1011.300 a2,2 0 0 1 -2,-2 Z" fill="#c9c9c9"/>
<g transform="translate(1001.700 1017.800)"><g fill="#a6a8a6"><rect x="-2.300" y="-8.800" width="4.600" height="17.600" rx=".6" transform="rotate(0)"/><rect x="-2.300" y="-8.800" width="4.600" height="17.600" rx=".6" transform="rotate(60)"/><rect x="-2.300" y="-8.800" width="4.600" height="17.600" rx=".6" transform="rotate(120)"/><circle r="6.700"/></g><circle r="3.100" fill="#f4f4f4"/></g></svg>
<span class="t " style="left:1601.70px;top:1009.93px;font-size:15.2px;line-height:15.2px;color:#f7f1ea;letter-spacing:0.262px;font-weight:bold;">Dec 6</span>
<span class="t " style="left:1650.50px;top:1009.93px;font-size:15.2px;line-height:15.2px;color:#f7f1ea;letter-spacing:0.136px;font-weight:bold;">04:47:18</span>
<svg class="a" style="left:1753px;top:1008px" width="22" height="18" viewBox="1753 1008 22 18">
<path d="M1763.700,1023.800 L1755.600,1014.200 A12.600,12.600 0 0 1 1771.800,1014.200 Z" fill="#f7f1ea"/></svg>
<svg class="a" style="left:1782px;top:1008px" width="20" height="19" viewBox="1782 1008 20 19">
<path d="M1784.600,1015.200 H1788 L1792,1011.200 V1024.200 L1788,1020.200 H1784.600 Z" fill="#f7f1ea"/>
<path d="M1794,1014.600 a4.200,4.200 0 0 1 0,6.200" fill="none" stroke="#f7f1ea" stroke-width="1.300"/>
<path d="M1796,1011.800 a8,8 0 0 1 0,11.800" fill="none" stroke="#f7f1ea" stroke-opacity=".45" stroke-width="1.300"/></svg>
<svg class="a" style="left:1813px;top:1008px" width="14" height="19" viewBox="1813 1008 14 19">
<rect x="1818.600" y="1010" width="5" height="2" fill="#f7f1ea"/>
<rect x="1816.200" y="1011.800" width="9.600" height="12" rx="1" fill="none" stroke="#f7f1ea" stroke-width="1.600"/>
<rect x="1817.400" y="1020.600" width="7.200" height="2.400" fill="#c62828"/></svg>
</div>
</body></html>
